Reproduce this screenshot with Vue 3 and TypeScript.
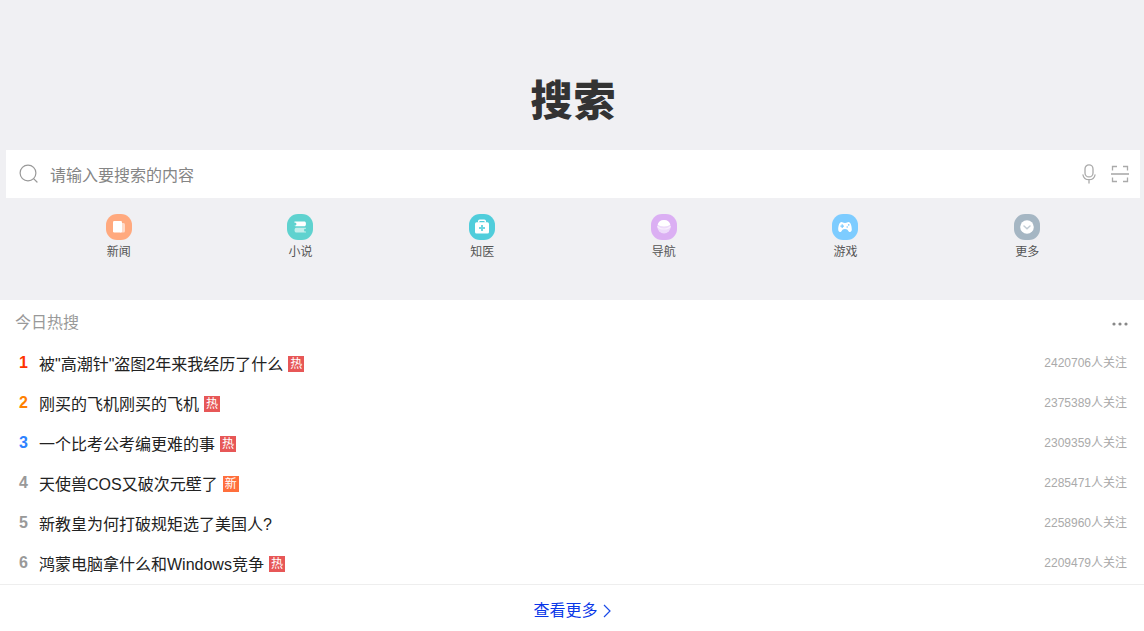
<script setup lang="ts">
import { ref } from 'vue'

interface Category {
  id: string
  label: string
}

interface HotItem {
  title: string
  tag?: '热' | '新'
  followers: number
}

const query = ref('')

const categories: Category[] = [
  { id: 'news', label: '新闻' },
  { id: 'novel', label: '小说' },
  { id: 'doctor', label: '知医' },
  { id: 'nav', label: '导航' },
  { id: 'game', label: '游戏' },
  { id: 'more', label: '更多' },
]

const hotItems: HotItem[] = [
  { title: '被"高潮针"盗图2年来我经历了什么', tag: '热', followers: 2420706 },
  { title: '刚买的飞机刚买的飞机', tag: '热', followers: 2375389 },
  { title: '一个比考公考编更难的事', tag: '热', followers: 2309359 },
  { title: '天使兽COS又破次元壁了', tag: '新', followers: 2285471 },
  { title: '新教皇为何打破规矩选了美国人?', followers: 2258960 },
  { title: '鸿蒙电脑拿什么和Windows竞争', tag: '热', followers: 2209479 },
]
</script>

<template>
  <div class="page">
    <header class="hero">
      <h1 class="logo"><span>搜</span><span>索</span></h1>

      <form class="search" role="search" @submit.prevent>
        <button class="icon-button" type="submit" aria-label="搜索">
          <svg width="20" height="20" viewBox="0 0 20 20" fill="none" stroke="#999" stroke-width="1.2" stroke-linecap="round">
            <circle cx="9" cy="9" r="7.9" />
            <path d="M14.8 14.8 18 18" />
          </svg>
        </button>
        <input v-model="query" class="search-input" type="text" aria-label="搜索内容" placeholder="请输入要搜索的内容" />
        <button class="icon-button" type="button" aria-label="语音搜索">
          <svg width="14" height="20" viewBox="0 0 14 20" fill="none" stroke="#aaa" stroke-width="1.3" stroke-linecap="round">
            <rect x="3" y="0.9" width="8" height="12" rx="4" />
            <path d="M1 11c.5 3 3 4.700 6 4.700s5.500-1.700 6-4.700M7 15.700v3.300" />
          </svg>
        </button>
        <button class="icon-button" type="button" aria-label="扫一扫">
          <svg width="18" height="18" viewBox="0 0 18 18" fill="none" stroke="#aaa" stroke-width="1.300">
            <path d="M1.500 5.500V1.500H6M12 1.500h4.500v4M16.500 12.500v4H12M6 16.500H1.500v-4" />
            <path d="M0 9h18" stroke="#bbb" stroke-width="2" />
          </svg>
        </button>
      </form>

      <nav class="categories">
        <a v-for="category in categories" :key="category.id" class="category" href="#">
          <span class="category-icon" :class="category.id">
            <svg v-if="category.id === 'news'" width="26" height="26" viewBox="0 0 26 26">
              <path d="M14 9h3.500a1.500 1.500 0 0 1 1.500 1.500v6.500a1.500 1.500 0 0 1-1.500 1.500H14z" fill="#ffdac8" />
              <rect x="7" y="7" width="9" height="11.500" rx="1.200" fill="#fff" />
            </svg>
            <svg v-else-if="category.id === 'novel'" width="26" height="26" viewBox="0 0 26 26">
              <path d="M7.500 7.500h10.200c1.700 0 1.700 4.700 0 4.700H8.500c-1 0-1-.7-1-.7h1.300c.8 0 .8-2.800 0-2.800H7.500z" fill="#fff" />
              <path d="M19 13.700H9c-1.900 0-1.900 4.800 0 4.800h10v-1h-1.300c-.8 0-.8-2.700 0-2.700H19z" fill="#c2eeeb" />
            </svg>
            <svg v-else-if="category.id === 'doctor'" width="26" height="26" viewBox="0 0 26 26">
              <path d="M9.700 8.500V7.200a1 1 0 0 1 1-1h4.600a1 1 0 0 1 1 1v1.300" fill="none" stroke="#fff" stroke-width="1.500" />
              <rect x="6" y="8.200" width="14" height="11.300" rx="1.600" fill="#fff" />
              <path d="M13 11v6M10 14h6" stroke="#6fd6e1" stroke-width="2" />
            </svg>
            <svg v-else-if="category.id === 'nav'" width="26" height="26" viewBox="0 0 26 26">
              <circle cx="13" cy="12.800" r="6.700" fill="#eddbfa" />
              <path d="M6.700 10.500a6.700 6.700 0 0 1 12.600 0c-2 2.600-10.600 2.600-12.600 0z" fill="#fff" />
              <path d="M6.500 12.300c2.500 3.600 10.500 3.600 13 0" fill="none" stroke="#f8effd" stroke-width="1.200" />
            </svg>
            <svg v-else-if="category.id === 'game'" width="26" height="26" viewBox="0 0 26 26">
              <path d="M9.500 8c1.200 0 1.500 1 3.500 1s2.300-1 3.500-1c2.200 0 3.300 4.500 3.300 7.300 0 3-2.100 3.500-3.300 1.900-.9-1.300-1.500-2.200-3.500-2.200s-2.600.9-3.500 2.200c-1.200 1.600-3.300 1.100-3.300-1.900C6.200 12.500 7.300 8 9.500 8z" fill="#fff" />
              <path d="M10.200 10.300v3.600M8.400 12.100H12" stroke="#7dccff" stroke-width="1.200" />
              <circle cx="16.700" cy="10.900" r=".8" fill="#7dccff" />
              <circle cx="15.200" cy="13" r=".8" fill="#7dccff" />
            </svg>
            <svg v-else width="26" height="26" viewBox="0 0 26 26">
              <circle cx="13" cy="13" r="6.800" fill="#fff" />
              <path d="m10 12 3 2.700 3-2.700" fill="none" stroke="#c2ccd4" stroke-width="1.500" stroke-linecap="round" />
            </svg>
          </span>
          <span class="category-label">{{ category.label }}</span>
        </a>
      </nav>
    </header>

    <main>
      <div class="section-head">
        <h2 class="section-title">今日热搜</h2>
        <button class="icon-button" type="button" aria-label="更多选项">
          <svg width="16" height="4" viewBox="0 0 16 4" fill="#888">
            <circle cx="2" cy="2" r="1.600" />
            <circle cx="8" cy="2" r="1.600" />
            <circle cx="14" cy="2" r="1.600" />
          </svg>
        </button>
      </div>

      <ol class="hot-list">
        <li v-for="(item, index) in hotItems" :key="item.title" class="hot-item">
          <span class="rank" :class="`rank-${index + 1}`">{{ index + 1 }}</span>
          <a class="hot-link" href="#">{{ item.title }}</a>
          <span v-if="item.tag" class="tag" :class="{ fresh: item.tag === '新' }">{{ item.tag }}</span>
          <span class="followers">{{ item.followers }}人关注</span>
        </li>
      </ol>

      <a class="view-more" href="#">
        查看更多
        <svg width="8" height="14" viewBox="0 0 8 14" fill="none" stroke="#1a4be8" stroke-width="1.200">
          <path d="m1 1 6 6-6 6" />
        </svg>
      </a>
    </main>
  </div>
</template>

<style>
body {
  margin: 0;
  background: #fff;
}
</style>

<style scoped>
.page {
  font-family: "Liberation Sans", "Noto Sans CJK SC", sans-serif;
  font-size: 16px;
  color: #222;
}

a {
  color: inherit;
  text-decoration: none;
}

svg {
  display: block;
}

.hero {
  padding: 68px 4px 38px 6px;
  background: #f0f0f3;
}

.logo {
  display: flex;
  justify-content: center;
  gap: 1px;
  margin: 0 0 22px;
  font-family: "Noto Sans CJK SC", sans-serif;
  font-size: 42px;
  font-weight: 900;
  line-height: 60px;
  color: #333;
}

.search {
  display: flex;
  align-items: center;
  gap: 15px;
  height: 48px;
  padding: 0 11px 0 13px;
  background: #fff;
}

.icon-button {
  flex: none;
  padding: 0;
  border: 0;
  background: none;
  cursor: pointer;
}

.search-input {
  flex: 1;
  min-width: 0;
  height: 48px;
  padding: 3px 0 0;
  margin-left: -4px;
  border: 0;
  outline: none;
  background: none;
  font: inherit;
  color: #222;
}

.search-input::placeholder {
  color: #858585;
  opacity: 1;
}

.categories {
  display: grid;
  grid-template-columns: repeat(6, 1fr);
  padding: 16px 22px 0;
}

.category {
  display: flex;
  flex-direction: column;
  align-items: center;
  gap: 2px;
}

.category-icon {
  border-radius: 11px;
}

.news { background: #ffa97e; }
.novel { background: #5fd2cf; }
.doctor { background: #50cddb; }
.nav { background: #dbaff3; }
.game { background: #7dccff; }
.more { background: #a5b6c3; }

.category-label {
  font-size: 12px;
  line-height: 20px;
  color: #555;
}

.section-head {
  display: flex;
  align-items: center;
  justify-content: space-between;
  height: 40px;
  padding: 4px 16px 0 15px;
}

.section-title {
  margin: 0;
  padding-bottom: 2px;
  font-size: 16px;
  font-weight: 400;
  line-height: 24px;
  color: #999;
}

.hot-list {
  margin: 0;
  padding: 0;
  list-style: none;
  border-bottom: 1px solid #eee;
}

.hot-item {
  display: flex;
  align-items: center;
  height: 40px;
  padding: 0 17px 0 19px;
}

.rank {
  width: 20px;
  padding-bottom: 2px;
  font-weight: 700;
  line-height: 20px;
  color: #999;
}

.rank-1 { color: #ff3300; }
.rank-2 { color: #ff8000; }
.rank-3 { color: #2e82ff; }

.hot-link {
  padding-top: 2px;
  line-height: 24px;
}

.tag {
  width: 16px;
  margin-left: 5px;
  background: #e75757;
  font-size: 12px;
  line-height: 16px;
  text-align: center;
  color: #fff;
}

.tag.fresh {
  background: #ff6f3c;
}

.followers {
  margin-left: auto;
  padding-bottom: 2px;
  font-size: 12px;
  line-height: 20px;
  color: #aaa;
}

.view-more {
  display: flex;
  align-items: center;
  justify-content: center;
  gap: 5px;
  padding: 14px 0 8px;
  line-height: 24px;
  color: #0a37e8;
}
</style>
